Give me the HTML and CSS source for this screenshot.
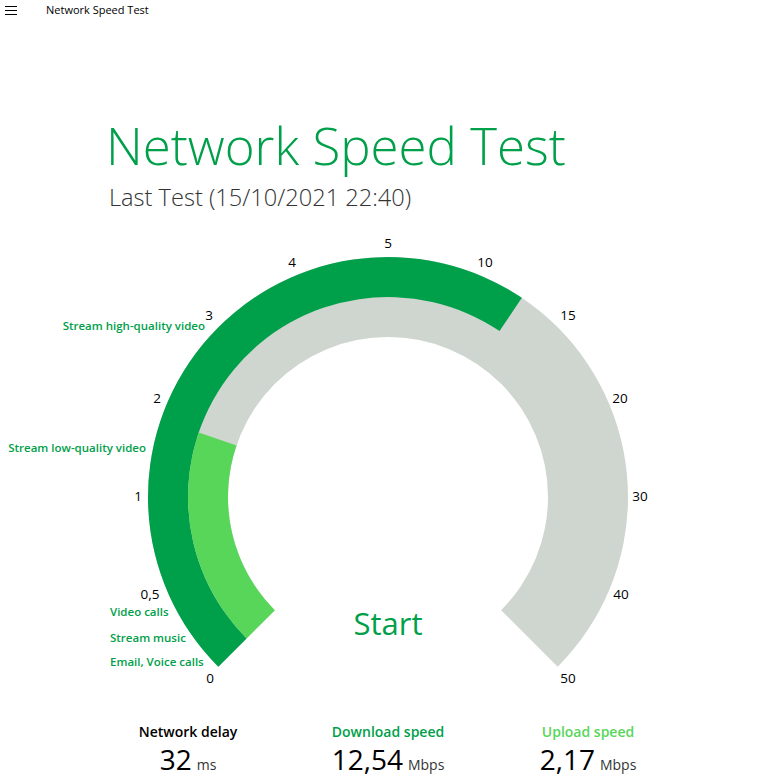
FILE: index.html
```html
<!DOCTYPE html>
<html lang="en">
<head>
<meta charset="utf-8">
<title>Network Speed Test</title>
<link rel="stylesheet" href="styles.css">
</head>
<body>
<header class="appbar">
  <svg class="menu-icon" width="12" height="9" viewBox="0 0 12 9"><path d="M0 0.5H12M0 4.5H12M0 8.5H12" stroke="#000" stroke-width="1"/></svg>
  <span class="app-title">Network Speed Test</span>
</header>
<main class="page">
  <section class="heading">
    <h1 class="title">Network Speed Test</h1>
    <p class="subtitle">Last Test (15/10/2021 22:40)</p>
  </section>
  <section class="gauge">
    <svg class="gauge-svg" width="772" height="470" viewBox="0 225 772 470">
      <path class="track" d="M218.29 666.71 A240 240 0 1 1 557.71 666.71 L501.14 610.14 A160 160 0 1 0 274.86 610.14 Z"/>
      <path class="down" d="M218.29 666.71 A240 240 0 0 1 521.85 297.8 L499.54 331 A200 200 0 0 0 246.58 638.42 Z"/>
      <path class="up" d="M246.58 638.42 A200 200 0 0 1 198.7 432.5 L236.5 445.4 A160 160 0 0 0 274.86 610.14 Z"/>
      <g class="ticks">
        <text x="210" y="678">0</text>
        <text x="150" y="594">0,5</text>
        <text x="138" y="496">1</text>
        <text x="157" y="398">2</text>
        <text x="209" y="315">3</text>
        <text x="292" y="262">4</text>
        <text x="388" y="243">5</text>
        <text x="485" y="262">10</text>
        <text x="568" y="315">15</text>
        <text x="620" y="398">20</text>
        <text x="640" y="496">30</text>
        <text x="621" y="594">40</text>
        <text x="568" y="678">50</text>
      </g>
      <g class="uses">
        <text class="end" x="205" y="325">Stream high-quality video</text>
        <text class="end" x="146" y="447">Stream low-quality video</text>
        <text x="110" y="611">Video calls</text>
        <text x="110" y="637">Stream music</text>
        <text x="110" y="661">Email, Voice calls</text>
      </g>
      <text class="start" x="388" y="623">Start</text>
    </svg>
  </section>
  <section class="stats">
    <div class="stat">
      <div class="stat-label">Network delay</div>
      <div class="stat-value">32<span class="unit">ms</span></div>
    </div>
    <div class="stat">
      <div class="stat-label download">Download speed</div>
      <div class="stat-value">12,54<span class="unit">Mbps</span></div>
    </div>
    <div class="stat">
      <div class="stat-label upload">Upload speed</div>
      <div class="stat-value">2,17<span class="unit">Mbps</span></div>
    </div>
  </section>
</main>
</body>
</html>
```
FILE: styles.css
```css
* { box-sizing: border-box; }
html, body {
  margin: 0;
  padding: 0;
  background: #ffffff;
  font-family: "Open Sans", "Noto Sans", sans-serif;
  color: #000;
}
.appbar {
  height: 20px;
  display: flex;
  align-items: center;
}
.menu-icon {
  margin-left: 5px;
}
.app-title {
  margin-left: 29px;
  font-size: 11px;
  line-height: 20px;
}
.page {
  width: 772px;
}
.heading {
  padding-left: 106px;
  padding-top: 95px;
}
.title {
  margin: 0;
  font-size: 51px;
  font-weight: 300;
  line-height: 60px;
  color: #00a04a;
}
.subtitle {
  margin: 6px 0 0 3px;
  font-size: 23.6px;
  font-weight: 300;
  line-height: 32px;
  color: #333;
}
.gauge {
  height: 470px;
  margin-top: 12px;
}
.gauge-svg { display: block; }
.track { fill: #cfd5cf; }
.down { fill: #00a04a; }
.up { fill: #58d65a; }
.ticks text {
  font-size: 13.5px;
  fill: #000;
  text-anchor: middle;
  dominant-baseline: central;
}
.uses text {
  font-size: 11.5px;
  font-weight: 600;
  fill: #00a04a;
  dominant-baseline: central;
}
.uses text.end { text-anchor: end; }
.start {
  font-size: 31px;
  fill: #00a04a;
  text-anchor: middle;
  dominant-baseline: central;
}
.stats {
  display: grid;
  grid-template-columns: repeat(3, 200px);
  padding-left: 88px;
  margin-top: 27px;
}
.stat {
  display: flex;
  flex-direction: column;
  align-items: center;
}
.stat-label {
  font-size: 14px;
  font-weight: 600;
  line-height: 20px;
}
.stat-label.download { color: #00a04a; }
.stat-label.upload { color: #58d65a; }
.stat-value {
  font-size: 28px;
  line-height: 34px;
}
.unit {
  font-size: 14px;
  color: #333;
  margin-left: 5px;
}
```
